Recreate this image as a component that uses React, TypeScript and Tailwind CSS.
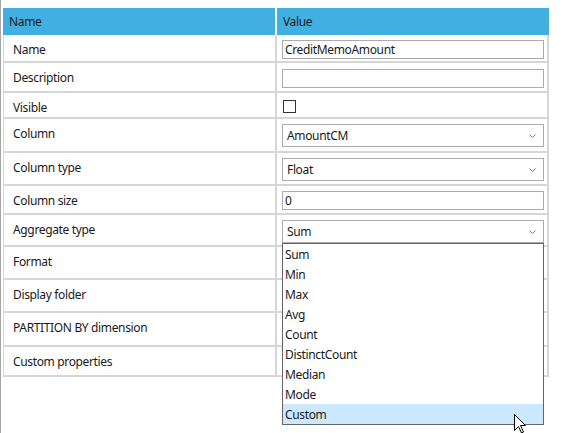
type Row = {
  label: string;
  h: number;
  ctl?: "text" | "combo" | "check";
  value?: string;
  top?: number;
};

const rows: Row[] = [
  { label: "Name", h: 28, ctl: "text", value: "CreditMemoAmount" },
  { label: "Description", h: 30, ctl: "text", value: "", top: 6 },
  { label: "Visible", h: 26, ctl: "check", top: 7 },
  { label: "Column", h: 34, ctl: "combo", value: "AmountCM" },
  { label: "Column type", h: 33, ctl: "combo", value: "Float" },
  { label: "Column size", h: 29, ctl: "text", value: "0" },
  { label: "Aggregate type", h: 32, ctl: "combo", value: "Sum" },
  { label: "Format", h: 33 },
  { label: "Display folder", h: 33 },
  { label: "PARTITION BY dimension", h: 34 },
  { label: "Custom properties", h: 30 },
];

const options = ["Sum", "Min", "Max", "Avg", "Count", "DistinctCount", "Median", "Mode", "Custom"];

function Control({ row }: { row: Row }) {
  if (row.ctl === "text") {
    return (
      <div className="w-[262px] h-[19px] border border-[#ababab] bg-white pl-[2px] leading-[18px] text-[#1a1a1a]">
        {row.value}
      </div>
    );
  }
  if (row.ctl === "check") {
    return <div className="ml-[1px] w-[13px] h-[13px] border border-[#333333] bg-white" />;
  }
  if (row.ctl === "combo") {
    return (
      <div className="w-[262px] h-[23px] border border-[#acacac] bg-white pl-[4px] pr-[7px] flex items-center justify-between text-[#1a1a1a]">
        <span className="pt-[1px]">{row.value}</span>
        <svg width="7" height="4" viewBox="0 0 7 4">
          <path d="M0.5 0.5 L3.5 3.5 L6.5 0.5" fill="none" stroke="#7a7a7a" strokeWidth="1" />
        </svg>
      </div>
    );
  }
  return null;
}

export default function App() {
  return (
    <div className="relative w-[567px] h-[433px] bg-white border-l border-[#a6a6a6] overflow-hidden font-['Noto_Sans',sans-serif] text-[12px] tracking-[-0.35px] text-[#1a1a1a]">
      <div className="ml-[2px] mt-[8px] w-[546px]">
        {/* header */}
        <div className="flex h-[27px]">
          <div className="w-[272px] bg-[#41b0e0] pl-[6px] pt-[1px] flex items-center">Name</div>
          <div className="w-[2px] bg-white" />
          <div className="flex-1 bg-[#41b0e0] pl-[6px] pt-[1px] flex items-center">Value</div>
        </div>

        {/* rows */}
        <div className="border-l border-r-2 border-[#d6d6d6]">
          {rows.map((row) => (
            <div
              key={row.label}
              className="flex border-b-2 border-[#d6d6d6]"
              style={{ height: row.h }}
            >
              <div className="w-[271px] pl-[9px] pt-[7px] leading-[16px]">{row.label}</div>
              <div className="flex-1 border-l-2 border-[#d6d6d6] pl-[5px]" style={{ paddingTop: row.top ?? 5 }}>
                <Control row={row} />
              </div>
            </div>
          ))}
        </div>
      </div>

      {/* open dropdown for Aggregate type */}
      <div className="absolute left-[281px] top-[243px] w-[262px] h-[182px] border border-[#646464] bg-white">
        {options.map((o) => (
          <div
            key={o}
            className={`h-[20px] pl-[2px] pt-[1px] leading-[20px] ${o === "Custom" ? "bg-[#cce8ff]" : ""}`}
          >
            {o}
          </div>
        ))}
      </div>

      {/* mouse pointer */}
      <svg className="absolute left-[513px] top-[414px]" width="13" height="20" viewBox="0 0 13 20">
        <path
          d="M0.5 0.5 L0.5 16.5 L4.5 12.5 L7.5 19 L9.5 18 L6.5 11.5 L11.5 11.5 Z"
          fill="white"
          stroke="black"
          strokeWidth="1"
        />
      </svg>
    </div>
  );
}
